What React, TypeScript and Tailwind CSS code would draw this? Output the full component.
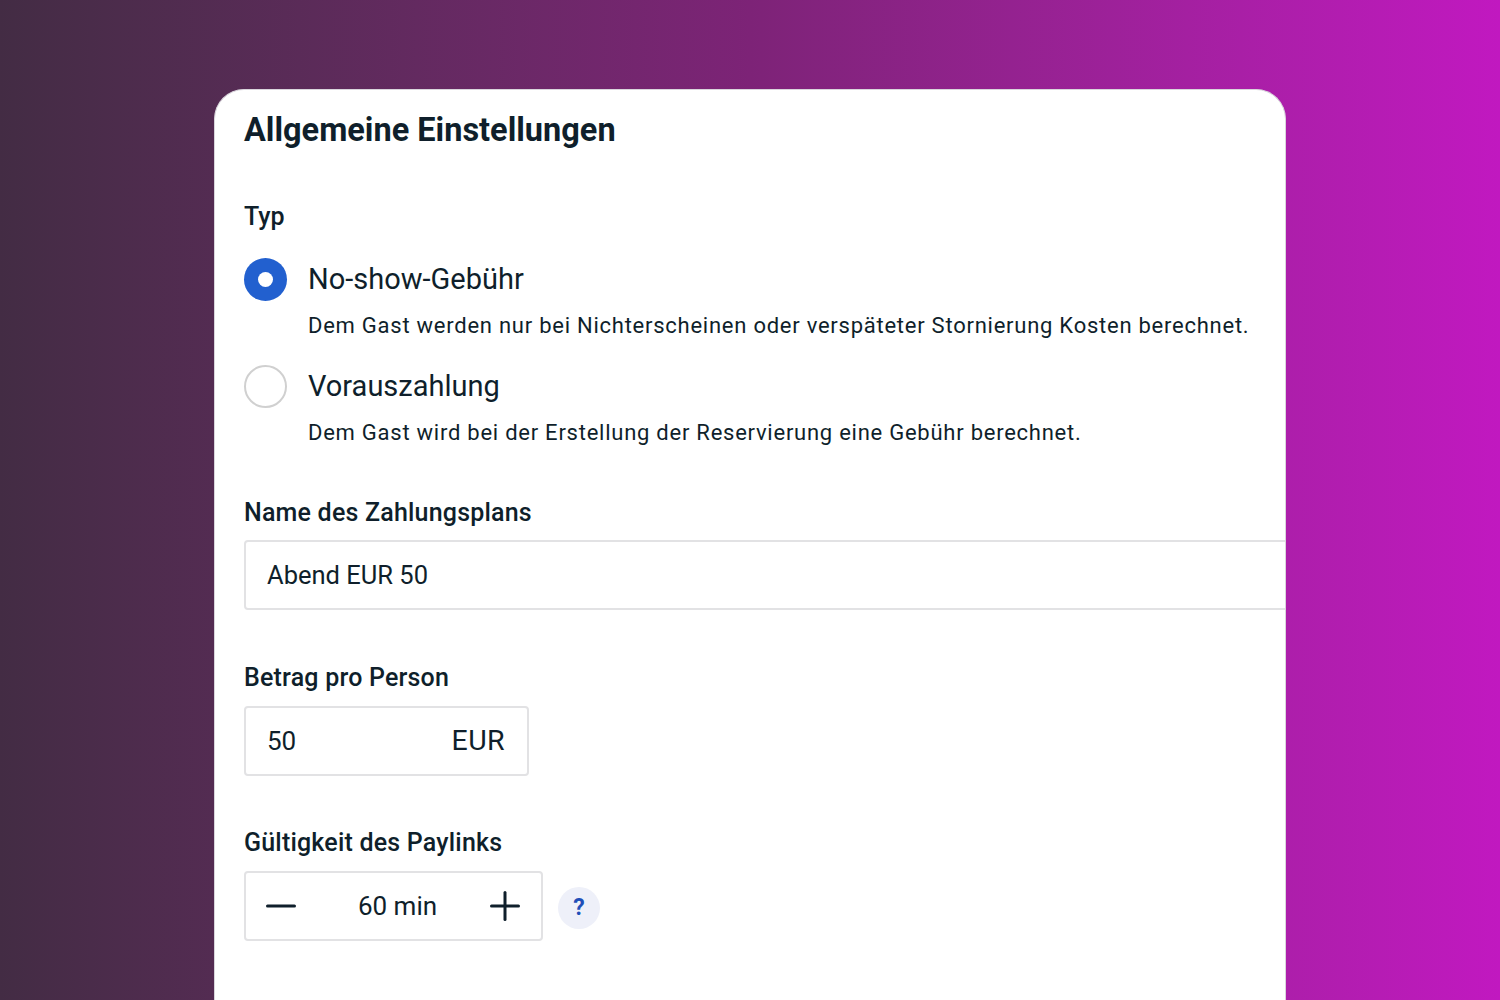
import React from "react";

export default function App() {
  return (
    <div
      className="w-[1500px] h-[1000px] overflow-hidden bg-gradient-to-r from-[#432c44] via-[#7d2377] to-[#c118c0] pl-[214px] pt-[89px] text-[#0f1f2b]"
      style={{ fontFamily: "Roboto, 'Noto Sans', sans-serif" }}
    >
      <div className="w-[1072px] h-[911px] bg-white rounded-t-[30px] overflow-hidden border border-[#d9d6dc] border-b-0 pl-[29px] pt-[20px]">
        <h1 className="text-[32.5px] font-bold leading-[40px]">Allgemeine Einstellungen</h1>

        <div className="mt-[51px] text-[25px] font-medium leading-[32px]">Typ</div>

        <div className="mt-[25px] flex items-start">
          <div className="w-[43px] h-[43px] rounded-full bg-[#2260cf] flex items-center justify-center shrink-0">
            <div className="w-[15px] h-[15px] rounded-full bg-white" />
          </div>
          <div className="ml-[21px]">
            <div className="text-[29px] leading-[43px]">No-show-Gebühr</div>
            <div className="mt-[10px] text-[22px] leading-[30px] tracking-[0.75px]">
              Dem Gast werden nur bei Nichterscheinen oder verspäteter Stornierung Kosten berechnet.
            </div>
          </div>
        </div>

        <div className="mt-[24px] flex items-start">
          <div className="w-[43px] h-[43px] rounded-full border-2 border-[#d0d0d0] shrink-0" />
          <div className="ml-[21px]">
            <div className="text-[29px] leading-[43px]">Vorauszahlung</div>
            <div className="mt-[10px] text-[22px] leading-[30px] tracking-[0.75px]">
              Dem Gast wird bei der Erstellung der Reservierung eine Gebühr berechnet.
            </div>
          </div>
        </div>

        <div className="mt-[50px] text-[25px] font-medium leading-[30px] tracking-[0.2px]">Name des Zahlungsplans</div>
        <div className="mt-[12px] w-[1100px] h-[70px] border-2 border-[#e2e2e4] rounded-[4px] flex items-center pl-[21px] text-[25.5px]">
          Abend EUR 50
        </div>

        <div className="mt-[53px] text-[25px] font-medium leading-[30px] tracking-[0.2px]">Betrag pro Person</div>
        <div className="mt-[13px] w-[285px] h-[70px] border-2 border-[#e2e2e4] rounded-[4px] flex items-center justify-between pl-[21px] pr-[22px] text-[26px]">
          <span>50</span>
          <span className="text-[28.5px] tracking-[0.4px]">EUR</span>
        </div>

        <div className="mt-[52px] text-[25px] font-medium leading-[30px] tracking-[0.2px]">Gültigkeit des Paylinks</div>
        <div className="mt-[13px] flex items-center">
          <div className="w-[299px] h-[70px] border-2 border-[#e2e2e4] rounded-[4px] flex items-center pl-[20px] pr-[21px] text-[26px]">
            <svg width="30" height="30" viewBox="0 0 30 30" className="shrink-0">
              <line x1="1.5" y1="15" x2="28.5" y2="15" stroke="#0f1f2b" strokeWidth="3" strokeLinecap="round" />
            </svg>
            <span className="flex-1 text-center pl-[9px]">60 min</span>
            <svg width="30" height="30" viewBox="0 0 30 30" className="shrink-0">
              <line x1="1.5" y1="15" x2="28.5" y2="15" stroke="#0f1f2b" strokeWidth="3" strokeLinecap="round" />
              <line x1="15" y1="1.5" x2="15" y2="28.5" stroke="#0f1f2b" strokeWidth="3" strokeLinecap="round" />
            </svg>
          </div>
          <div className="ml-[15px] mt-[4px] w-[42px] h-[42px] rounded-full bg-[#eef0f9] flex items-center justify-center text-[#1f4fb8] text-[23px] font-bold">
            ?
          </div>
        </div>
      </div>
    </div>
  );
}
